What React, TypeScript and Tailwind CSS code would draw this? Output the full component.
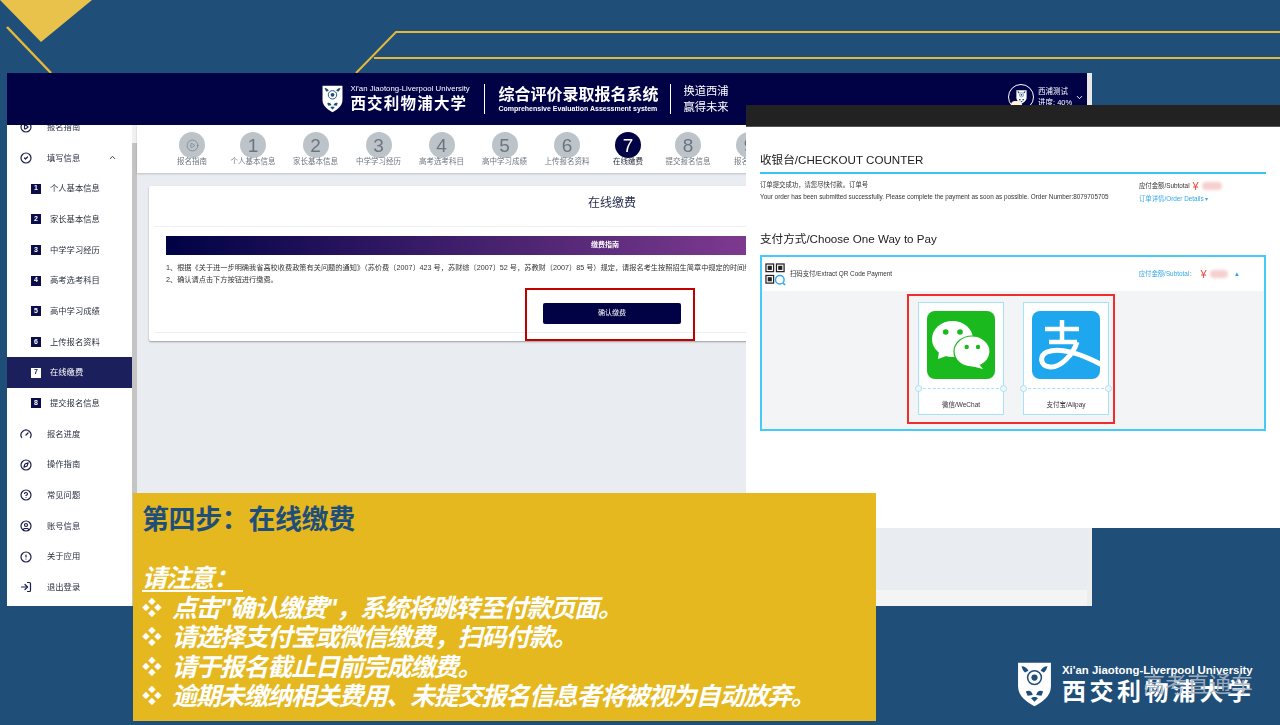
import React from "react";
import { CirclePlay, CircleCheck, Gauge, Compass, CircleHelp, CircleUser, CircleAlert, LogIn, ChevronUp, ChevronDown } from "lucide-react";

const CJK = "font-['Liberation_Sans','Noto_Sans_CJK_SC',sans-serif]";

function Shield({ className }: { className?: string }) {
  return (
    <svg viewBox="0 0 40 52" className={className}>
      <path d="M1 1H39V28C39 40 28 47 20 51C12 47 1 40 1 28Z" fill="#fff" />
      <path d="M5 5C9 5 11 7 13 10L9 12C7 11 6 8 5 5ZM35 5C31 5 29 7 27 10L31 12C33 11 34 8 35 5Z" fill="#1f4e79" />
      <circle cx="20" cy="18" r="8" fill="none" stroke="#1f4e79" strokeWidth="1.8" />
      <circle cx="20" cy="18" r="3.6" fill="#1f4e79" />
      <path d="M10 34C14 32 17 34 18 38L12 39ZM30 34C26 32 23 34 22 38L28 39ZM16 42C18 40 22 40 24 42L20 46Z" fill="#1f4e79" />
    </svg>
  );
}

const subItems = ["个人基本信息", "家长基本信息", "中学学习经历", "高考选考科目", "高中学习成绩", "上传报名资料", "在线缴费", "提交报名信息"];
const lowerItems = [
  { label: "报名进度", Icon: Gauge },
  { label: "操作指南", Icon: Compass },
  { label: "常见问题", Icon: CircleHelp },
  { label: "账号信息", Icon: CircleUser },
  { label: "关于应用", Icon: CircleAlert },
  { label: "退出登录", Icon: LogIn },
];
const steps = [
  { n: "", label: "报名指南", w: "w-[60px]" },
  { n: "1", label: "个人基本信息", w: "w-[62px]" },
  { n: "2", label: "家长基本信息", w: "w-[63px]" },
  { n: "3", label: "中学学习经历", w: "w-[63px]" },
  { n: "4", label: "高考选考科目", w: "w-[63px]" },
  { n: "5", label: "高中学习成绩", w: "w-[63px]" },
  { n: "6", label: "上传报名资料", w: "w-[62px]" },
  { n: "7", label: "在线缴费", w: "w-[60px]", on: true },
  { n: "8", label: "提交报名信息", w: "w-[60px]" },
  { n: "9", label: "报名进度", w: "w-[62px]" },
];

function Row({ children, className = "" }: { children: React.ReactNode; className?: string }) {
  return <div className={`flex h-[30.67px] shrink-0 items-center ${className}`}>{children}</div>;
}

function Sidebar() {
  return (
    <aside className="-mt-[13px] flex w-[125px] shrink-0 flex-col bg-white text-[8.3px] text-[#2a3040]">
      <Row>
        <CirclePlay size={12} strokeWidth={2.4} className="ml-[13px] mr-[15px] text-[#1a1f4a]" />
        <span>报名指南</span>
      </Row>
      <Row>
        <CircleCheck size={12} strokeWidth={2.4} className="ml-[13px] mr-[15px] text-[#1a1f4a]" />
        <span>填写信息</span>
        <ChevronUp size={9} strokeWidth={2.5} className="ml-[28px] text-[#333]" />
      </Row>
      {subItems.map((t, i) => (
        <Row key={t} className={i === 6 ? "bg-[#1b1f5c] text-white" : ""}>
          <span className={`ml-[24px] mr-[9px] flex h-[10px] w-[10px] items-center justify-center text-[7px] font-bold ${i === 6 ? "bg-white text-[#1b1f5c]" : "bg-[#0a0d4a] text-white"}`}>{i + 1}</span>
          <span>{t}</span>
        </Row>
      ))}
      {lowerItems.map(({ label, Icon }) => (
        <Row key={label}>
          <Icon size={12} strokeWidth={2.4} className="ml-[13px] mr-[15px] text-[#1a1f4a]" />
          <span>{label}</span>
        </Row>
      ))}
    </aside>
  );
}

function MainWindow() {
  return (
    <section className={`absolute left-[7px] top-[73px] flex h-[533px] w-[1085px] flex-col overflow-hidden bg-white blur-[0.3px] ${CJK}`}>
      <header className="relative z-10 flex h-[52px] shrink-0 items-center justify-center bg-[#000245] pr-[5px] text-white">
        <div className="ml-[-43px] flex items-center">
          <Shield className="h-[28px] w-[21px]" />
          <div className="ml-[7px] flex w-[120px] flex-col">
            <span className="text-[7.8px] leading-[10px] whitespace-nowrap">Xi'an Jiaotong-Liverpool University</span>
            <span className="text-[15.5px] font-bold leading-[20px] tracking-[1.2px] whitespace-nowrap">西交利物浦大学</span>
          </div>
          <div className="ml-[14px] mr-[13px] h-[30px] w-px bg-white" />
          <div className="flex flex-col">
            <span className="text-[16px] font-bold leading-[20px] whitespace-nowrap">综合评价录取报名系统</span>
            <span className="text-[7px] font-bold leading-[8px] whitespace-nowrap">Comprehensive Evaluation Assessment system</span>
          </div>
          <div className="ml-[12px] mr-[12px] h-[30px] w-px bg-white" />
          <div className="flex flex-col text-[11.3px] leading-[16px]">
            <span>换道西浦</span>
            <span>赢得未来</span>
          </div>
        </div>
        <div className="absolute left-[1001px] top-[11px] flex items-center">
          <div className="flex h-[26px] w-[26px] items-center justify-center rounded-full border border-white">
            <Shield className="h-[14px] w-[11px]" />
          </div>
          <div className="ml-[4px] flex flex-col text-[7.5px] leading-[11px]">
            <span>西浦测试</span>
            <span>进度: 40%</span>
          </div>
          <ChevronDown size={9} strokeWidth={2.5} className="ml-[3px]" />
        </div>
        <span className="absolute left-[1004px] top-[28px] h-[8px] w-[11px] rounded-full bg-[#fff1dc]" />
        <div className="absolute right-0 top-0 h-full w-[5px] bg-[#e8e8e8]" />
      </header>
      <div className="flex min-h-0 flex-1">
        <Sidebar />
        <div className="w-[5px] shrink-0 bg-[#f1f1f1] pt-[18px]">
          <div className="h-full bg-[#c4c4c4]" />
        </div>
        <main className="flex min-w-0 flex-1 flex-col bg-[#e9edf2]">
          <nav className="flex h-[48px] shrink-0 bg-white pl-[25px] shadow-[0_1px_2px_rgba(0,0,0,0.2)]">
            {steps.map((s) => (
              <div key={s.label + s.n} className={`relative flex ${s.w} shrink-0 flex-col items-center pt-[7px]`}>
                <span className={`flex h-[26px] w-[26px] items-center justify-center rounded-full text-[19px] leading-none ${s.on ? "bg-[#000245] text-white" : "bg-[#bcc3c9] text-[#6d7580]"}`}>
                  {s.n || <CirclePlay size={13} strokeWidth={1.2} />}
                </span>
                <span className={`-mt-[2px] whitespace-nowrap text-[7.5px] leading-[11px] ${s.on ? "text-[#2a3040]" : "text-[#6f767f]"}`}>{s.label}</span>
              </div>
            ))}
          </nav>
          <div className="relative mx-[12px] mt-[13px] flex h-[155px] w-[926px] flex-col rounded-[2px] bg-white px-[5px] shadow-[0_1px_2px_rgba(0,0,0,0.35)]">
            <div className="flex h-[41px] shrink-0 items-center justify-center border-b border-[#eef0f3] pb-[6px] text-[12px] text-[#2a3050]">在线缴费</div>
            <div className="mx-[12px] mt-[9px] flex h-[19px] shrink-0 items-center justify-center bg-[linear-gradient(90deg,#000245,#7d3a8f_65%,#a040a8)] pr-[14px] text-[7px] font-bold text-white">缴费指南</div>
            <div className="mx-[12px] mt-[7px] text-[7.2px] leading-[12px] text-[#333]">
              <p className="whitespace-nowrap">1、根据《关于进一步明确我省高校收费政策有关问题的通知》（苏价费〔2007〕423 号，苏财综〔2007〕52 号，苏教财〔2007〕85 号）规定，请报名考生按照招生简章中规定的时间缴纳报名考核费。</p>
              <p className="whitespace-nowrap">2、确认请点击下方按钮进行缴费。</p>
            </div>
            <div className="mt-[17px] flex justify-center">
              <button className="h-[21px] w-[138px] rounded-[2px] bg-[#000245] text-[7px] text-white">确认缴费</button>
            </div>
            <div className="mt-[8px] border-b border-[#eef0f3]" />
            <div className="absolute left-[376px] top-[102px] h-[53px] w-[170px] border-2 border-[#c20000]" />
          </div>
          <div className="flex-1" />
          <div className="h-[16px] bg-[#f4f4f4]" />
        </main>
        <div className="w-[5px] shrink-0 bg-[#ededed]" />
      </div>
    </section>
  );
}

function PayCard({ label, children }: { label: string; children: React.ReactNode }) {
  return (
    <div className="relative flex h-[113px] w-[86px] flex-col items-center border border-[#a5e3f7] bg-white">
      <div className="mt-[8px] h-[68px] w-[68px] overflow-hidden rounded-[8px]">{children}</div>
      <div className="mt-[9px] w-[76px] border-t border-dashed border-[#a5e3f7]" />
      <span className="mt-[12px] text-[6.5px] leading-[8px] text-[#333]">{label}</span>
      <span className="absolute -left-[4px] top-[82px] h-[7px] w-[7px] rounded-full border border-[#a5e3f7] bg-[#f3f4f6]" />
      <span className="absolute -right-[4px] top-[82px] h-[7px] w-[7px] rounded-full border border-[#a5e3f7] bg-[#f3f4f6]" />
    </div>
  );
}

function CheckoutWindow() {
  return (
    <section className={`absolute left-[746px] top-[105px] flex h-[423px] w-[534px] flex-col bg-white blur-[0.25px] ${CJK}`}>
      <div className="h-[22px] shrink-0 border-b border-[#555] bg-[#222]" />
      <div className="flex flex-1 flex-col px-[14px]">
        <h2 className="mt-[25px] text-[11.6px] leading-[16px] text-[#222]">收银台/CHECKOUT COUNTER</h2>
        <div className="mt-[4px] h-[2px] shrink-0 bg-[#35c5f3]" />
        <div className="mt-[5px] flex">
          <div className="w-[379px] text-[6.36px] leading-[12px] text-[#333]">
            <p>订单提交成功，请您尽快付款。订单号</p>
            <p className="whitespace-nowrap">Your order has been submitted successfully. Please complete the payment as soon as possible. Order Number:8079705705</p>
          </div>
          <div className="text-[6.36px] leading-[13px]">
            <p className="flex items-center text-[#333]">应付金额/Subtotal <span className="mx-[3px] text-[11px] leading-[10px] text-[#f04a3a]">¥</span><span className="h-[8px] w-[20px] rounded-sm bg-[#f6cfcf] blur-[1.5px]" /></p>
            <p className="text-[#35a9e6]">订单详情/Order Details ▾</p>
          </div>
        </div>
        <h2 className="mt-[26px] text-[11.6px] leading-[16px] text-[#222]">支付方式/Choose One Way to Pay</h2>
        <div className="mt-[8px] flex h-[176px] flex-col border-2 border-[#45cbf8]">
          <div className="flex h-[34px] shrink-0 items-center bg-white pl-[3px] pr-[24px] text-[6.36px]">
            <svg viewBox="0 0 22 26" className="h-[25px] w-[21px]" fill="none" stroke="#222" strokeWidth="1.3">
              <rect x="1" y="2" width="8" height="8" /><rect x="3.5" y="4.5" width="3" height="3" fill="#222" />
              <rect x="12" y="2" width="8" height="8" /><rect x="14.5" y="4.5" width="3" height="3" fill="#222" />
              <rect x="1" y="14" width="8" height="8" /><rect x="3.5" y="16.5" width="3" height="3" fill="#222" />
              <circle cx="15.5" cy="18.5" r="4.5" stroke="#35a9e6" strokeWidth="1.5" /><path d="M19 22L21 24" stroke="#35a9e6" strokeWidth="1.8" />
            </svg>
            <span className="ml-[4px] text-[#333]">扫码支付/Extract QR Code Payment</span>
            <span className="ml-auto flex items-center text-[#35a9e6]">应付金额/Subtotal：<span className="ml-[5px] text-[11px] leading-[10px] text-[#f04a3a]">¥</span><span className="ml-[3px] h-[8px] w-[18px] rounded-sm bg-[#f6cfcf] blur-[1.5px]" /><span className="ml-[6px]">▲</span></span>
          </div>
          <div className="flex flex-1 justify-center bg-[#f3f4f6] pr-[4px]">
            <div className="mt-[3px] flex h-[130px] w-[208px] gap-[19px] border-2 border-[#f22c2c] pl-[9px] pt-[6px]">
              <PayCard label="微信/WeChat">
                <svg viewBox="0 0 68 68" className="h-full w-full">
                  <rect width="68" height="68" fill="#1aba1e" />
                  <ellipse cx="25.5" cy="28" rx="20.5" ry="18" fill="#fff" />
                  <path d="M12 40L11 48L22 44Z" fill="#fff" />
                  <circle cx="18.7" cy="21" r="2.8" fill="#1aba1e" /><circle cx="33" cy="21" r="2.8" fill="#1aba1e" />
                  <ellipse cx="45" cy="40.5" rx="18" ry="15.5" fill="#fff" stroke="#1aba1e" strokeWidth="1.2" />
                  <path d="M51 52L56 58L44 55Z" fill="#fff" />
                  <circle cx="39.7" cy="36" r="2.2" fill="#1aba1e" /><circle cx="51" cy="36" r="2.2" fill="#1aba1e" />
                </svg>
              </PayCard>
              <PayCard label="支付宝/Alipay">
                <svg viewBox="0 0 68 68" className="h-full w-full" fill="none" stroke="#fff">
                  <rect width="68" height="68" fill="#1ea7ee" stroke="none" />
                  <path d="M13 18H47M30 9V31M17 31H45" strokeWidth="4.5" />
                  <path d="M45 31C41 44 28 57 18 56C8 55 7 45 15 41C27 36 48 42 70 54" strokeWidth="5" />
                </svg>
              </PayCard>
            </div>
          </div>
        </div>
      </div>
    </section>
  );
}

function Notes() {
  return (
    <section className={`absolute left-[133px] top-[493px] flex h-[228px] w-[743px] flex-col bg-[#e5b81f] pl-[9px] pt-[9px] ${CJK}`}>
      <h1 className="text-[27px] font-bold leading-[36px] tracking-[-0.4px] text-[#1f4e79]">第四步：在线缴费</h1>
      <div className="mt-[26px] text-[25px] font-bold italic leading-[29.5px] tracking-[-1.2px] text-white">
        <p className="underline underline-offset-[3px]">请注意：&nbsp;</p>
        {[
          "点击\"确认缴费\"，系统将跳转至付款页面。",
          "请选择支付宝或微信缴费，扫码付款。",
          "请于报名截止日前完成缴费。",
          "逾期未缴纳相关费用、未提交报名信息者将被视为自动放弃。",
        ].map((t) => (
          <p key={t} className="flex items-center whitespace-nowrap">
            <span className="w-[30px] shrink-0 text-[20px] not-italic tracking-normal">❖</span>
            <span>{t}</span>
          </p>
        ))}
      </div>
    </section>
  );
}

export default function App() {
  return (
    <div className={`relative h-[725px] w-[1280px] overflow-hidden bg-[#1f4e79] ${CJK}`}>
      <svg viewBox="0 0 1280 725" className="absolute inset-0 h-full w-full" fill="none">
        <polygon points="0,0 92,0 41,42" fill="#e8c24a" />
        <path d="M7 27L51 73" stroke="#e5b83a" strokeWidth="2.5" />
        <path d="M356 73L396 32H1280M374 58H1280" stroke="#e5b83a" strokeWidth="2" />
      </svg>
      <MainWindow />
      <CheckoutWindow />
      <Notes />
      <div className="absolute left-[1017px] top-[662px] flex items-center text-white">
        <Shield className="h-[45px] w-[35px]" />
        <div className="ml-[10px] flex flex-col">
          <span className="text-[11.4px] font-bold leading-[14px] whitespace-nowrap">Xi'an Jiaotong-Liverpool University</span>
          <span className="text-[24px] font-bold leading-[30px] tracking-[3.5px] whitespace-nowrap">西交利物浦大学</span>
        </div>
      </div>
      <div className="absolute left-[1143px] top-[671px] text-[22px] leading-[28px] text-[#a9b6c4]/90">高考直通车</div>
    </div>
  );
}
